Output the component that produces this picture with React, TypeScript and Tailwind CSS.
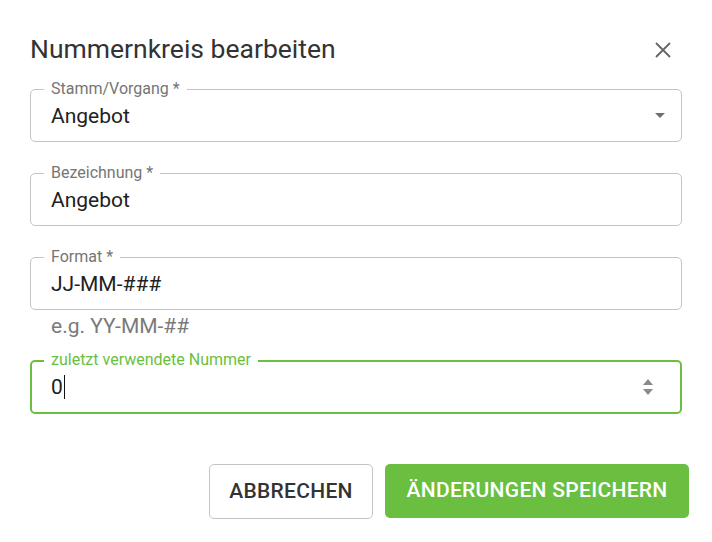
import React from "react";

function Field({
  label,
  value,
  focused,
  right,
  cursor,
}: {
  label: string;
  value: string;
  focused?: boolean;
  right?: React.ReactNode;
  cursor?: boolean;
}) {
  return (
    <div
      className={
        focused
          ? "relative h-[54px] rounded-[5px] border-2 border-[#6abf40] flex items-center pl-[19px] pr-[22px]"
          : "relative h-[53px] rounded-[5px] border border-[#c4c4c4] flex items-center pl-[20px] pr-[22px]"
      }
    >
      <span
        className={
          focused
            ? "absolute left-[12px] top-[-12px] bg-white px-[7px] text-[16px] leading-[20px] text-[#6abf40]"
            : "absolute left-[13px] top-[-11px] bg-white px-[7px] text-[16px] leading-[20px] text-[#757575]"
        }
      >
        {label}
      </span>
      <span className="flex-1 flex items-center text-[21px] leading-[26px] text-[#212121]">
        {value}
        {cursor && <span className="ml-[1px] inline-block h-[24px] w-[1px] bg-[#111]" />}
      </span>
      {right}
    </div>
  );
}

export default function App() {
  return (
    <div
      className="w-[712px] h-[542px] bg-white relative overflow-hidden"
      style={{ fontFamily: "Roboto, 'Noto Sans', sans-serif" }}
    >
      <div className="flex items-center justify-between pl-[30px] pr-[40px] pt-[32px] h-[66px]">
        <h1 className="text-[26.5px] leading-[34px] text-[#333333] font-normal">
          Nummernkreis bearbeiten
        </h1>
        <svg width="18" height="18" viewBox="0 0 18 18" className="mt-[2px]">
          <path d="M2 2 L16 16 M16 2 L2 16" stroke="#666" strokeWidth="1.8" strokeLinecap="butt" />
        </svg>
      </div>

      <div className="px-[30px] pt-[23px] flex flex-col">
        <Field
          label="Stamm/Vorgang *"
          value="Angebot"
          right={
            <svg width="10" height="6" viewBox="0 0 10 6" className="mr-[-6px] mt-[1px]">
              <path d="M0 0 L10 0 L5 5 Z" fill="#707070" />
            </svg>
          }
        />
        <div className="h-[31px]" />
        <Field label="Bezeichnung *" value="Angebot" />
        <div className="h-[31px]" />
        <Field label="Format *" value="JJ-MM-###" />
        <div className="pl-[21px] h-[34px] flex items-center text-[21px] text-[#7a7a7a]">
          e.g. YY-MM-##
        </div>
        <div className="h-[16px]" />
        <Field
          label="zuletzt verwendete Nummer"
          value="0"
          focused
          cursor
          right={
            <svg width="12" height="18" viewBox="0 0 12 18" className="mr-[4px]">
              <path d="M1 7 L11 7 L6 1 Z" fill="#8a8a8a" />
              <path d="M1 11 L11 11 L6 17 Z" fill="#8a8a8a" />
            </svg>
          }
        />
      </div>

      <div className="flex justify-end gap-[12px] pr-[23px] mt-[50px]">
        <button className="h-[55px] w-[164px] rounded-[5px] border border-[#c4c4c4] bg-white text-[21px] font-medium tracking-[0.3px] text-[#333333]">
          ABBRECHEN
        </button>
        <button className="h-[54px] w-[304px] rounded-[5px] bg-[#6abf40] text-[21px] font-medium tracking-[0.3px] text-white">
          ÄNDERUNGEN SPEICHERN
        </button>
      </div>
    </div>
  );
}
